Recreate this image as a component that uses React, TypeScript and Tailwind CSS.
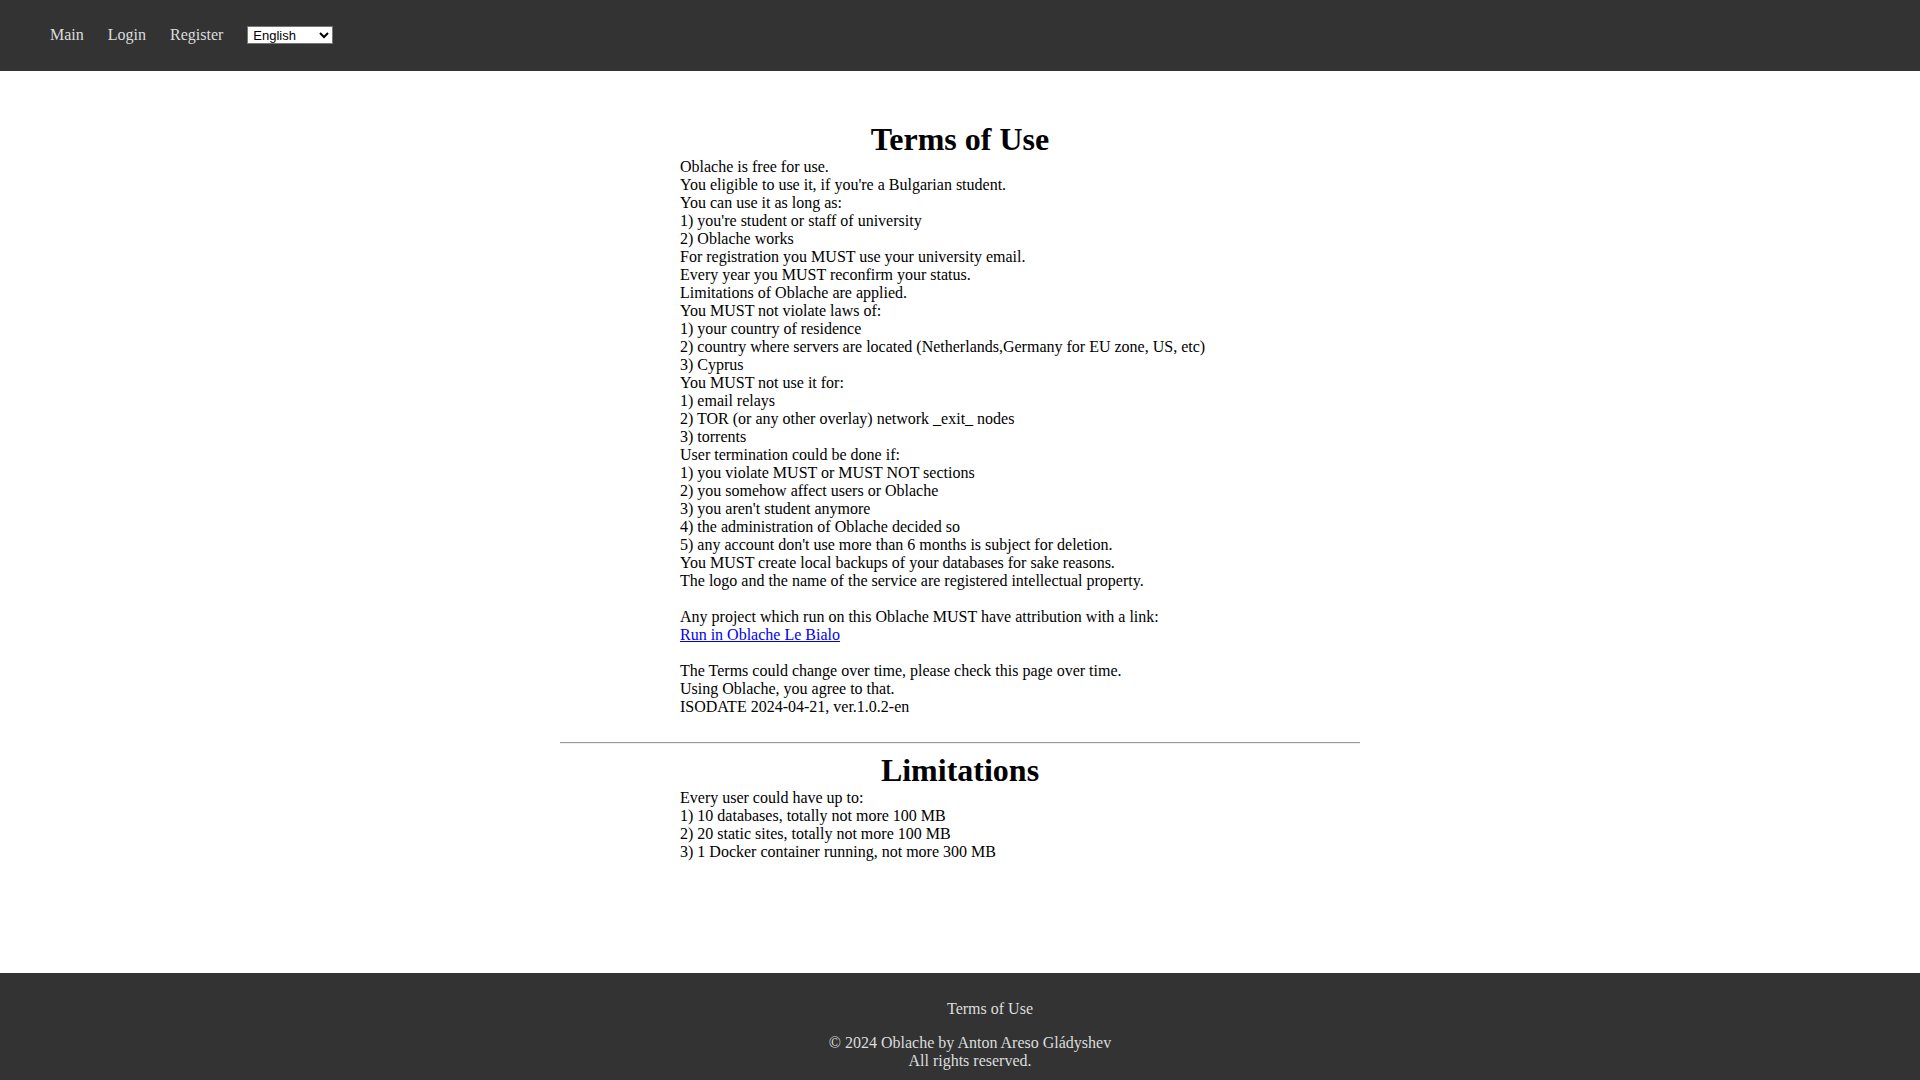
import React from "react";

const serif = { fontFamily: '"Liberation Serif", "Times New Roman", serif' };

const termsLines: (string | null | "link")[] = [
  "Oblache is free for use.",
  "You eligible to use it, if you're a Bulgarian student.",
  "You can use it as long as:",
  "1) you're student or staff of university",
  "2) Oblache works",
  "For registration you MUST use your university email.",
  "Every year you MUST reconfirm your status.",
  "Limitations of Oblache are applied.",
  "You MUST not violate laws of:",
  "1) your country of residence",
  "2) country where servers are located (Netherlands,Germany for EU zone, US, etc)",
  "3) Cyprus",
  "You MUST not use it for:",
  "1) email relays",
  "2) TOR (or any other overlay) network _exit_ nodes",
  "3) torrents",
  "User termination could be done if:",
  "1) you violate MUST or MUST NOT sections",
  "2) you somehow affect users or Oblache",
  "3) you aren't student anymore",
  "4) the administration of Oblache decided so",
  "5) any account don't use more than 6 months is subject for deletion.",
  "You MUST create local backups of your databases for sake reasons.",
  "The logo and the name of the service are registered intellectual property.",
  null,
  "Any project which run on this Oblache MUST have attribution with a link:",
  "link",
  null,
  "The Terms could change over time, please check this page over time.",
  "Using Oblache, you agree to that.",
  "ISODATE 2024-04-21, ver.1.0.2-en",
];

const limitLines = [
  "Every user could have up to:",
  "1) 10 databases, totally not more 100 MB",
  "2) 20 static sites, totally not more 100 MB",
  "3) 1 Docker container running, not more 300 MB",
];

export default function App() {
  return (
    <div className="min-h-[1080px] flex flex-col bg-white text-black" style={serif}>
      <header className="h-[71px] bg-[#333333] flex items-center pl-[50px] pb-[2px] shrink-0">
        <nav className="flex items-center gap-[24px] text-[16px] leading-[18px] text-[#dddddd]">
          <a href="#">Main</a>
          <a href="#">Login</a>
          <a href="#">Register</a>
          <select
            defaultValue="en"
            className="w-[86px] h-[18px] bg-white text-black text-[13px] leading-[16px] border border-[#767676] rounded-none pl-[1px]"
            style={{ fontFamily: '"Liberation Sans", Arial, sans-serif' }}
          >
            <option value="en">English</option>
            <option value="bg">Български</option>
          </select>
        </nav>
      </header>

      <main className="flex-1 flex flex-col items-center pt-[50px]">
        <h1 className="text-[32px] font-bold leading-[37px] text-center">Terms of Use</h1>
        <div className="w-[560px] text-[16px] leading-[18px]">
          {termsLines.map((l, i) =>
            l === null ? (
              <div key={i} className="h-[18px]" />
            ) : l === "link" ? (
              <div key={i}>
                <a href="#" className="text-[#0000ee] underline">Run in Oblache Le Bialo</a>
              </div>
            ) : (
              <div key={i}>{l}</div>
            )
          )}
        </div>
        <hr className="w-[800px] mt-[26px] mb-[8px] border-0 border-t border-t-[#9a9a9a] border-b border-b-[#eeeeee] h-[2px]" />
        <h1 className="text-[32px] font-bold leading-[37px] text-center">Limitations</h1>
        <div className="w-[560px] text-[16px] leading-[18px]">
          {limitLines.map((l, i) => (
            <div key={i}>{l}</div>
          ))}
        </div>
      </main>

      <footer className="h-[107px] bg-[#333333] text-[#dddddd] text-[16px] leading-[18px] pl-[20px] pt-[27px] shrink-0">
        <ul className="pl-[40px] text-center list-none">
          <li>
            <a href="#">Terms of Use</a>
          </li>
        </ul>
        <div className="text-center mt-[16px]">
          <div>© 2024 Oblache by Anton Areso Gládyshev</div>
          <div>All rights reserved.</div>
        </div>
      </footer>
    </div>
  );
}
